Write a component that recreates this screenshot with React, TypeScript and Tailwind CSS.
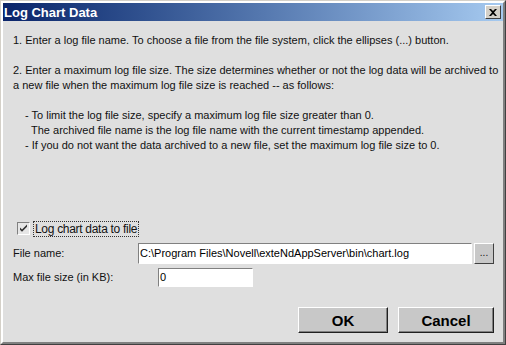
import React, { useState } from 'react';

const font = { fontFamily: '"Liberation Sans", Arial, sans-serif' };

function RaisedButton({ label, className }: { label: string; className: string }) {
  return (
    <button
      className={`flex items-center justify-center bg-[#c8c8c8] border border-t-white border-l-white border-r-[#202020] border-b-[#202020] shadow-[inset_-1px_-1px_0_#808080] text-[15px] font-bold text-black ${className}`}
    >
      {label}
    </button>
  );
}

export default function App() {
  const [checked, setChecked] = useState(true);

  return (
    <div className="w-[506px] h-[345px] bg-[#dfdfdf] border border-t-[#d4d0c8] border-l-[#d4d0c8] border-r-[#404040] border-b-[#404040] flex flex-col" style={font}>
      <div className="flex-1 flex flex-col border-2 border-t-white border-l-white border-r-[#808080] border-b-[#808080]">
        {/* Title bar */}
        <div className="h-[18px] flex items-center justify-between pl-[1px] pr-[2px] bg-gradient-to-r from-[#0a246a] to-[#a6caf0]">
          <span className="text-white font-bold text-[13px] leading-none">Log Chart Data</span>
          <button className="w-[16px] h-[14px] flex items-center justify-center bg-[#d4d0c8] border border-t-white border-l-white border-r-[#404040] border-b-[#404040]">
            <svg width="8" height="7" viewBox="0 0 8 7">
              <path d="M0 0h2l2 2 2-2h2L5 3.5 8 7H6L4 5 2 7H0l3-3.5z" fill="#000" />
            </svg>
          </button>
        </div>

        {/* Body */}
        <div className="flex-1 flex flex-col pl-[10px] pr-[4px] pt-[12px] text-[11px] leading-[15px] text-[#111] whitespace-nowrap">
          <p>1. Enter a log file name. To choose a file from the file system, click the ellipses (...) button.</p>
          <p className="mt-[15px]">
            2. Enter a maximum log file size. The size determines whether or not the log data will be archived to
            <br />a new file when the maximum log file size is reached -- as follows:
          </p>
          <div className="mt-[15px] pl-[12px]">
            <p>- To limit the log file size, specify a maximum log file size greater than 0.</p>
            <p className="pl-[6px]">The archived file name is the log file name with the current timestamp appended.</p>
            <p>- If you do not want the data archived to a new file, set the maximum log file size to 0.</p>
          </div>

          {/* Checkbox */}
          <label className="mt-[69px] ml-[4px] flex items-center gap-[3px] h-[13px]">
            <span
              onClick={() => setChecked(!checked)}
              className="w-[13px] h-[13px] bg-[#e6e6e6] border border-t-[#808080] border-l-[#808080] border-r-white border-b-white flex items-center justify-center"
            >
              {checked && (
                <svg width="9" height="9" viewBox="0 0 9 9">
                  <path d="M1 3.5l2 2 5-5v2.2L3 7.8 1 5.8z" fill="#303030" />
                </svg>
              )}
            </span>
            <span className="border border-dotted border-[#333] px-[1px] leading-[14px] text-[12px] tracking-[-0.3px]">Log chart data to file</span>
          </label>

          {/* File name */}
          <div className="mt-[8px] flex items-center h-[21px]">
            <span className="w-[125px]">File name:</span>
            <div className="w-[334px] h-[21px] bg-white border border-t-[#808080] border-l-[#808080] border-r-white border-b-white flex items-center pl-[1px] text-black">
              C:\Program Files\Novell\exteNdAppServer\bin\chart.log
            </div>
            <button className="ml-[2px] w-[20px] h-[21px] bg-[#c8c8c8] border border-t-white border-l-white border-r-[#404040] border-b-[#404040] text-[10px] leading-none flex items-end justify-center pb-[5px]">
              ...
            </button>
          </div>

          {/* Max file size */}
          <div className="mt-[4px] flex items-center h-[19px]">
            <span className="w-[145px]">Max file size (in KB):</span>
            <div className="w-[95px] h-[19px] bg-white border border-t-[#808080] border-l-[#808080] border-r-white border-b-white flex items-center pl-[1px] text-black">
              0
            </div>
          </div>

          {/* Buttons */}
          <div className="mt-[20px] flex justify-end gap-[10px] pr-[5px]">
            <RaisedButton label="OK" className="w-[90px] h-[26px]" />
            <RaisedButton label="Cancel" className="w-[96px] h-[26px]" />
          </div>
        </div>
      </div>
    </div>
  );
}
